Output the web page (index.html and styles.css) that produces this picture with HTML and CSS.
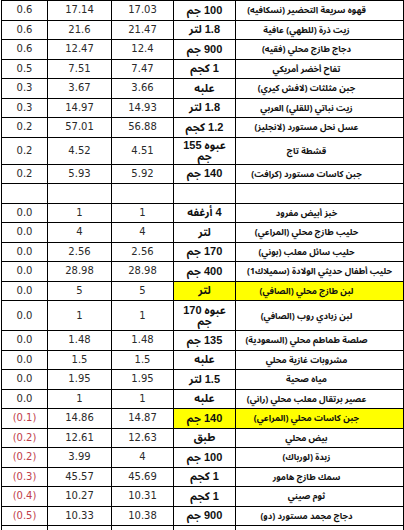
FILE: index.html
```html
<!DOCTYPE html>
<html lang="ar" dir="rtl">
<head>
<meta charset="utf-8">
<title>أسعار السلع</title>
<link rel="stylesheet" href="styles.css">
</head>
<body>
<table class="prices">
  <colgroup>
    <col class="c-name"><col class="c-unit"><col class="c-old"><col class="c-new"><col class="c-chg">
  </colgroup>
  <tbody>
    <tr><td class="name">قهوه سريعة التحضير (نسكافيه)</td><td class="unit">100 جم</td><td class="num">17.03</td><td class="num">17.14</td><td class="num">0.6</td></tr>
    <tr><td class="name">زيت ذرة (للطهي) عافية</td><td class="unit">1.8 لتر</td><td class="num">21.47</td><td class="num">21.6</td><td class="num">0.6</td></tr>
    <tr><td class="name">دجاج طازج محلي (فقيه)</td><td class="unit">900 جم</td><td class="num">12.4</td><td class="num">12.47</td><td class="num">0.6</td></tr>
    <tr><td class="name">تفاح أخضر أمريكي</td><td class="unit">1 كجم</td><td class="num">7.47</td><td class="num">7.51</td><td class="num">0.5</td></tr>
    <tr><td class="name">جبن مثلثات (لافش كيري)</td><td class="unit">علبه</td><td class="num">3.66</td><td class="num">3.67</td><td class="num">0.3</td></tr>
    <tr><td class="name">زيت نباتي (للقلي) العربي</td><td class="unit">1.8 لتر</td><td class="num">14.93</td><td class="num">14.97</td><td class="num">0.3</td></tr>
    <tr><td class="name">عسل نحل مستورد (لانجليز)</td><td class="unit">1.2 كجم</td><td class="num">56.88</td><td class="num">57.01</td><td class="num">0.2</td></tr>
    <tr class="tall-a"><td class="name">قشطة تاج</td><td class="unit"><span class="l1">عبوه 155</span><span class="l2">جم</span></td><td class="num">4.51</td><td class="num">4.52</td><td class="num">0.2</td></tr>
    <tr><td class="name">جبن كاسات مستورد (كرافت)</td><td class="unit">140 جم</td><td class="num">5.92</td><td class="num">5.93</td><td class="num">0.2</td></tr>
    <tr class="blank"><td></td><td></td><td></td><td></td><td></td></tr>
    <tr><td class="name">خبز أبيض مفرود</td><td class="unit">4 أرغفه</td><td class="num">1</td><td class="num">1</td><td class="num">0.0</td></tr>
    <tr><td class="name">حليب طازج محلي (المراعي)</td><td class="unit">لتر</td><td class="num">4</td><td class="num">4</td><td class="num">0.0</td></tr>
    <tr><td class="name">حليب سائل معلب (بوني)</td><td class="unit">170 جم</td><td class="num">2.56</td><td class="num">2.56</td><td class="num">0.0</td></tr>
    <tr><td class="name wide">حليب أطفال حديثي الولادة (سميلاك1)</td><td class="unit">400 جم</td><td class="num">28.98</td><td class="num">28.98</td><td class="num">0.0</td></tr>
    <tr class="hl"><td class="name">لبن طازج محلي (الصافي)</td><td class="unit">لتر</td><td class="num">5</td><td class="num">5</td><td class="num">0.0</td></tr>
    <tr class="tall-b"><td class="name">لبن زبادي  روب (الصافي)</td><td class="unit"><span class="l1">عبوه 170</span><span class="l2">جم</span></td><td class="num">1</td><td class="num">1</td><td class="num">0.0</td></tr>
    <tr><td class="name">صلصة طماطم محلي (السعودية)</td><td class="unit">135 جم</td><td class="num">1.48</td><td class="num">1.48</td><td class="num">0.0</td></tr>
    <tr><td class="name">مشروبات غازية محلي</td><td class="unit">علبه</td><td class="num">1.5</td><td class="num">1.5</td><td class="num">0.0</td></tr>
    <tr><td class="name">مياه صحية</td><td class="unit">1.5 لتر</td><td class="num">1.95</td><td class="num">1.95</td><td class="num">0.0</td></tr>
    <tr><td class="name">عصير برتقال معلب محلي (راني)</td><td class="unit">علبه</td><td class="num">1</td><td class="num">1</td><td class="num">0.0</td></tr>
    <tr class="hl"><td class="name">جبن كاسات محلي (المراعي)</td><td class="unit">140 جم</td><td class="num">14.87</td><td class="num">14.86</td><td class="num neg">(0.1)</td></tr>
    <tr><td class="name">بيض محلي</td><td class="unit">طبق</td><td class="num">12.63</td><td class="num">12.61</td><td class="num neg">(0.2)</td></tr>
    <tr><td class="name">زبدة (لورباك)</td><td class="unit">100 جم</td><td class="num">4</td><td class="num">3.99</td><td class="num neg">(0.2)</td></tr>
    <tr><td class="name">سمك طازج هامور</td><td class="unit">1 كجم</td><td class="num">45.69</td><td class="num">45.57</td><td class="num neg">(0.3)</td></tr>
    <tr><td class="name">ثوم صيني</td><td class="unit">1 كجم</td><td class="num">10.31</td><td class="num">10.27</td><td class="num neg">(0.4)</td></tr>
    <tr><td class="name">دجاج مجمد مستورد (دو)</td><td class="unit">900 جم</td><td class="num">10.38</td><td class="num">10.33</td><td class="num neg">(0.5)</td></tr>
    <tr class="blank"><td></td><td></td><td></td><td></td><td></td></tr>
  </tbody>
</table>
</body>
</html>
```

FILE: styles.css
```css
html, body {
  margin: 0;
  padding: 0;
  background: #ffffff;
}

.prices {
  direction: rtl;
  border-collapse: collapse;
  table-layout: fixed;
  width: 402px;
  margin: 0;
}

.c-name { width: 168px; }
.c-unit { width: 62px; }
.c-old  { width: 62px; }
.c-new  { width: 64px; }
.c-chg  { width: 46px; }

.prices td {
  border: 1px solid #000;
  padding: 0;
  text-align: center;
  vertical-align: middle;
  overflow: hidden;
  white-space: nowrap;
  line-height: 12px;
}

.prices tr { height: 19.5px; }
.prices tr.tall-a { height: 27px; }
.prices tr.tall-b { height: 30px; }

.prices td.name {
  font-family: "Noto Sans Arabic", "DejaVu Sans", sans-serif;
  font-weight: bold;
  font-size: 8.8px;
  color: #111;
  padding-right: 26px;
}

.prices td.name.wide {
  padding-right: 0;
}

.prices td.unit {
  font-family: "Liberation Sans", "Noto Sans Arabic", "DejaVu Sans", sans-serif;
  font-weight: bold;
  font-size: 11px;
  color: #111;
  line-height: 11px;
}

.unit .l1,
.unit .l2 {
  display: block;
}

.num {
  font-family: "DejaVu Sans", sans-serif;
  font-size: 10px;
  color: #2a2a2a;
}

.neg {
  color: #c0404a;
}

.hl .name,
.hl .unit {
  background: #ffff00;
}
```
